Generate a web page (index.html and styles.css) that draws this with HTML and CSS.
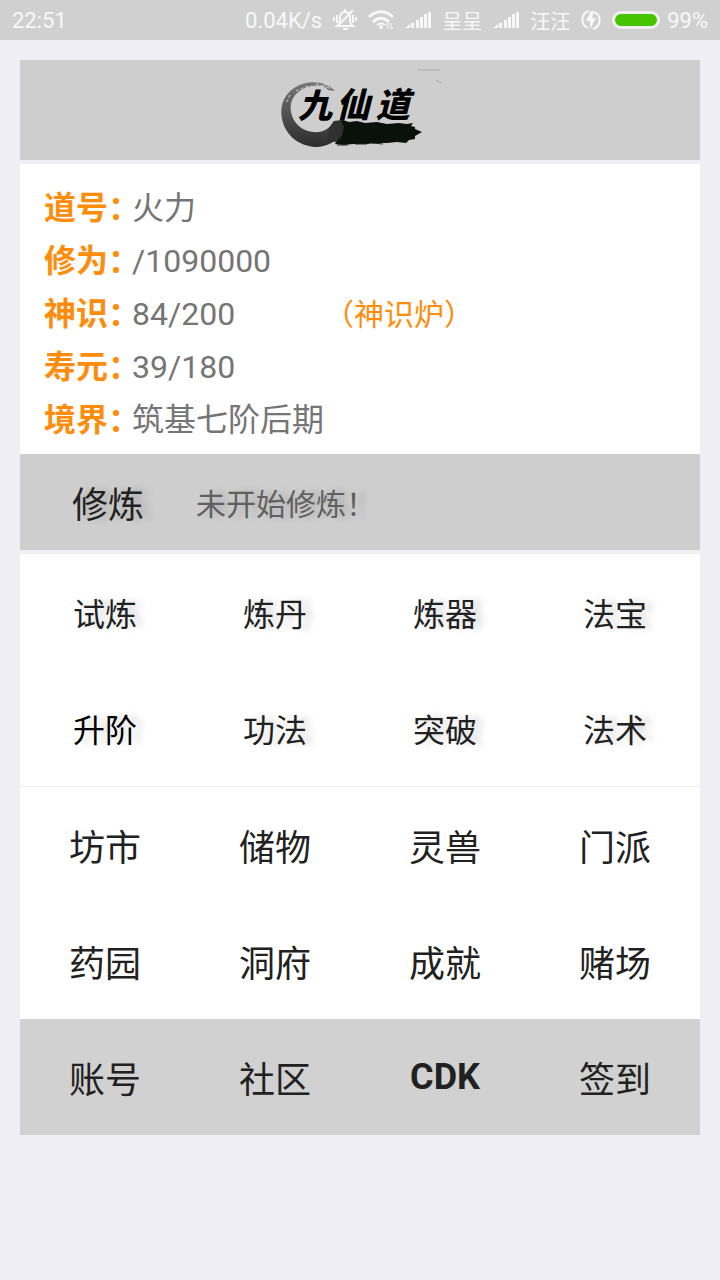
FILE: index.html
```html
<!DOCTYPE html>
<html lang="zh-CN">

<head>
    <meta charset="UTF-8">
    <meta name="viewport" content="width=device-width, initial-scale=1">
    <title>九仙道</title>
    <link rel="stylesheet" href="styles.css">
</head>

<body>

    <!-- Status bar -->
    <div class="status-bar">
        <span class="time">22:51</span>
        <span>0.04K/s</span>
        <svg class="icon" width="24" height="24" viewBox="0 0 24 24" fill="none" stroke="#f8f8f8" stroke-width="2">
            <path d="M4 18c3-2 3-4 3-8 0-4 2-6 5-6s5 2 5 6c0 4 0 6 3 8z" />
            <path d="M20 2L4 19M10 21h5M12 1v3" />
            <path d="M4 7v8M20 7v8" stroke-width="2" />
            <path d="M1 9v4M23 9v4" stroke-width="2" />
        </svg>
        <svg class="icon" width="26" height="20" viewBox="0 0 26 20" fill="none" stroke="#f8f8f8" stroke-width="2">
            <path d="M1 7c7-7 17-7 24 0M5 12c5-5 11-5 16 0" stroke-width="3" />
            <path d="M9 15c2-2 6-2 8 0" stroke-width="2" />
            <circle cx="13" cy="17" r="1" />
            <path d="M20 19v-6l-2 2M23 13v6l2-2" stroke-width="1" />
        </svg>
        <svg class="icon" width="26" height="20" viewBox="0 0 26 20" fill="#f8f8f8">
            <path d="M0 18l5-4v4zM6 13h3v5H6zM11 10h3v8h-3zM15 7h3v11h-3zM19 4h3v14h-3zM23 2h3v16h-3z" />
        </svg>
        <span class="carrier">呈呈</span>
        <svg class="icon" width="26" height="20" viewBox="0 0 26 20" fill="#f8f8f8">
            <path d="M0 18l5-4v4zM6 13h3v5H6zM11 10h3v8h-3zM15 7h3v11h-3zM19 4h3v14h-3zM23 2h3v16h-3z" />
        </svg>
        <span class="carrier">汪汪</span>
        <svg class="icon" width="20" height="20" viewBox="0 0 20 20">
            <path d="M8 1a9 9 0 0 0-1 17M13 2a9 9 0 0 1-1 17" fill="none" stroke="#f8f8f8" stroke-width="2" />
            <path d="M10 1L5 11h4v8l6-11h-4l2-7z" fill="#f8f8f8" />
        </svg>
        <span class="battery"></span>
        <span class="percent">99%</span>
    </div>

    <div class="app">

        <div class="header">
            <svg width="200" height="100" viewBox="0 0 200 100" role="img" aria-label="九仙道">
                <defs>
                    <linearGradient id="ink" x1="0" y1="0" x2="0" y2="1">
                        <stop offset="0" stop-color="#777" />
                        <stop offset="0.5" stop-color="#505050" />
                        <stop offset="1" stop-color="#2c2c2c" />
                    </linearGradient>
                </defs>
                <!-- ink circle -->
                <path d="M75 31C66 21 47 19 34 28C22 36 19 49 23 63C28 78 42 87 57 87C69 86 77 81 83 72L82 61L74 61C70 69 62 73 53 72C42 71 33 63 31 52C29 41 35 32 45 28C55 24 65 25 68 30z" fill="url(#ink)" />
                <path d="M36 31l12-5 10 1M46 28l18-2M56 24l14 4M30 35l-4 8M64 24l8 6" fill="none" stroke="#cecece" stroke-width="1" stroke-dasharray="3 2" />
                <!-- brush stroke -->
                <path d="M74 61l9-1 6 2 8-1 8 2 12-1 10 2 12-1 8 1 6-1-2 3 4 1 0 2 7 3-7 4 0 3-6 1-3 3-9-1-10 1-11 0-9 1-14 0-9 1-9-1 2-4-4-5z" fill="#0a110b" />
                <path d="M74 61l7 0 3 6-2 9-6 6-9-1 2-13z" fill="#303030" />
                <path d="M77 85h11M95 84h12M112 83l11 1" stroke="#222" stroke-width="1" />
                <path d="M158 10h22M176 20l6 3" stroke="#aaa" stroke-width="1" />
                <text class="logo-text" x="38" y="58">九</text>
                <text class="logo-text" x="76" y="57">仙</text>
                <text class="logo-text" x="116" y="57">道</text>
            </svg>
        </div>

        <div class="info">
            <p><b>道号：</b><span>火力</span></p>
            <p><b>修为：</b><span>/1090000</span></p>
            <p><b>神识：</b><span class="sense">84/200</span><a href="#">（神识炉）</a></p>
            <p><b>寿元：</b><span>39/180</span></p>
            <p><b>境界：</b><span>筑基七阶后期</span></p>
        </div>

        <div class="practice">
            <button type="button">修炼</button>
            <span>未开始修炼！</span>
        </div>

        <div class="menu shadow">
            <button type="button">试炼</button>
            <button type="button">炼丹</button>
            <button type="button">炼器</button>
            <button type="button">法宝</button>
            <button type="button" class="ready">升阶</button>
            <button type="button">功法</button>
            <button type="button">突破</button>
            <button type="button">法术</button>
        </div>

        <div class="menu">
            <button type="button">坊市</button>
            <button type="button">储物</button>
            <button type="button">灵兽</button>
            <button type="button">门派</button>
            <button type="button">药园</button>
            <button type="button">洞府</button>
            <button type="button">成就</button>
            <button type="button">赌场</button>
        </div>

        <div class="menu footer">
            <button type="button">账号</button>
            <button type="button">社区</button>
            <button type="button" class="cdk">CDK</button>
            <button type="button">签到</button>
        </div>

    </div>

</body>

</html>
```

FILE: styles.css
```css
body {
    margin: 0;
    background-color: #efeef4;
    font-family: Roboto, "Noto Sans CJK SC", sans-serif;
    color: #212121;
}

button {
    border: none;
    padding: 0;
    background: none;
    font-family: inherit;
    color: inherit;
    cursor: pointer;
}

/* Status bar */
.status-bar {
    display: flex;
    align-items: center;
    gap: 11px;
    height: 40px;
    padding: 0 12px;
    background-color: #d0d0d0;
    color: #f8f8f8;
    font-size: 22px;
}

.time {
    margin-right: auto;
}

.carrier {
    font-size: 20px;
}

.icon {
    flex: none;
}

.battery {
    box-sizing: border-box;
    width: 48px;
    height: 18px;
    border: 3px solid #f0f0f0;
    border-radius: 9px;
    background-color: #46c400;
}

.percent {
    margin-left: -4px;
}

.app {
    margin: 20px;
}

/* Logo */
.header {
    display: flex;
    justify-content: center;
    height: 100px;
    margin-bottom: 4px;
    background-color: #cecece;
}

.logo-text {
    font-family: "Noto Sans CJK SC", sans-serif;
    font-size: 34px;
    font-weight: 900;
    font-style: italic;
    fill: #000;
}

/* Character info */
.info {
    padding: 18px 24px 7px;
    background-color: #fff;
    font-size: 32px;
    line-height: 53px;
    color: #757575;
}

.info p {
    display: flex;
    margin: 0;
}

.info b {
    width: 88px;
    white-space: nowrap;
    font-feature-settings: "halt";
    color: #ff8c0a;
}

.sense {
    width: 192px;
}

.info a {
    font-size: 30px;
    text-decoration: none;
    color: #ff8c0a;
}

.practice {
    display: flex;
    align-items: center;
    gap: 52px;
    height: 96px;
    padding: 0 52px;
    margin-bottom: 4px;
    background-color: #cecece;
    text-shadow: 8px 0 6px rgba(0, 0, 0, 0.15);
}

.practice button {
    font-size: 36px;
    text-shadow: inherit;
}

.practice span {
    font-size: 30px;
    color: #606060;
}

/* Menus */
.menu {
    display: grid;
    grid-template-columns: repeat(4, 1fr);
    grid-auto-rows: 116px;
    background-color: #fff;
}

.menu button {
    font-size: 36px;
}

.shadow {
    border-bottom: 1px solid #efeef4;
}

.shadow button {
    font-size: 32px;
    text-shadow: 8px 0 6px rgba(0, 0, 0, 0.15);
}

.menu .ready {
    color: #000;
}

.footer {
    background-color: #d1d1d1;
}

.menu .cdk {
    font-weight: bold;
}
```
